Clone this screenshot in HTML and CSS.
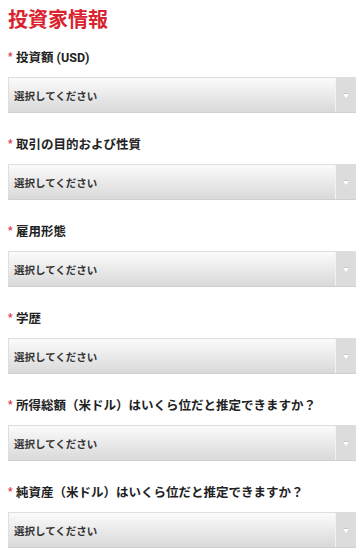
FILE: index.html
```html
<!DOCTYPE html>
<html lang="ja">
<head>
<meta charset="utf-8">
<link rel="stylesheet" href="styles.css">
</head>
<body>
<h1 class="title">投資家情報</h1>
<div class="form">
  <div class="field">
    <div class="label"><span class="req">*</span>投資額 (USD)</div>
    <div class="select"><span class="value">選択してください</span><span class="arrow"></span></div>
  </div>
  <div class="field">
    <div class="label"><span class="req">*</span>取引の目的および性質</div>
    <div class="select"><span class="value">選択してください</span><span class="arrow"></span></div>
  </div>
  <div class="field">
    <div class="label"><span class="req">*</span>雇用形態</div>
    <div class="select"><span class="value">選択してください</span><span class="arrow"></span></div>
  </div>
  <div class="field">
    <div class="label"><span class="req">*</span>学歴</div>
    <div class="select"><span class="value">選択してください</span><span class="arrow"></span></div>
  </div>
  <div class="field">
    <div class="label"><span class="req">*</span>所得総額（米ドル）はいくら位だと推定できますか？</div>
    <div class="select"><span class="value">選択してください</span><span class="arrow"></span></div>
  </div>
  <div class="field">
    <div class="label"><span class="req">*</span>純資産（米ドル）はいくら位だと推定できますか？</div>
    <div class="select"><span class="value">選択してください</span><span class="arrow"></span></div>
  </div>
</div>
</body>
</html>
```
FILE: styles.css
```css
html, body {
  margin: 0;
  padding: 0;
  background: #ffffff;
}
body {
  padding: 8px 6px 0 8px;
  font-family: Roboto, "Noto Sans CJK JP", sans-serif;
  color: #222222;
}
.title {
  margin: 0;
  font-family: "Noto Sans CJK JP", sans-serif;
  font-size: 20px;
  line-height: 22px;
  font-weight: 700;
  color: #d9242f;
}
.form {
  display: flex;
  flex-direction: column;
  gap: 22px;
  margin-top: 18px;
}
.field {
  display: flex;
  flex-direction: column;
  gap: 9px;
}
.label {
  display: flex;
  align-items: center;
  font-size: 12.5px;
  line-height: 20px;
  font-weight: 700;
  color: #222222;
}
.req {
  color: #e0303a;
  font-size: 10px;
  width: 8px;
  line-height: 10px;
  margin-top: -3px;
}
.select {
  display: flex;
  height: 36px;
  box-sizing: border-box;
  border: 1px solid #dedede;
  border-bottom-color: #cfcfcf;
  background: linear-gradient(#fbfbfb, #d9d9d9);
}
.value {
  flex: 1;
  display: flex;
  align-items: center;
  padding-left: 5px;
  font-family: "Noto Sans CJK JP", sans-serif;
  font-size: 10.5px;
  font-weight: 700;
  color: #333333;
}
.arrow {
  width: 19px;
  border-left: 1px solid #f2f2f2;
  background: #dcdcdc;
  display: flex;
  align-items: center;
  justify-content: center;
}
.arrow::before {
  content: "";
  width: 0;
  height: 0;
  border-left: 3.5px solid transparent;
  border-right: 3.5px solid transparent;
  border-top: 4px solid #ffffff;
  filter: drop-shadow(0 -1px 0 #c8c8c8);
  margin-top: 1px;
}
```
